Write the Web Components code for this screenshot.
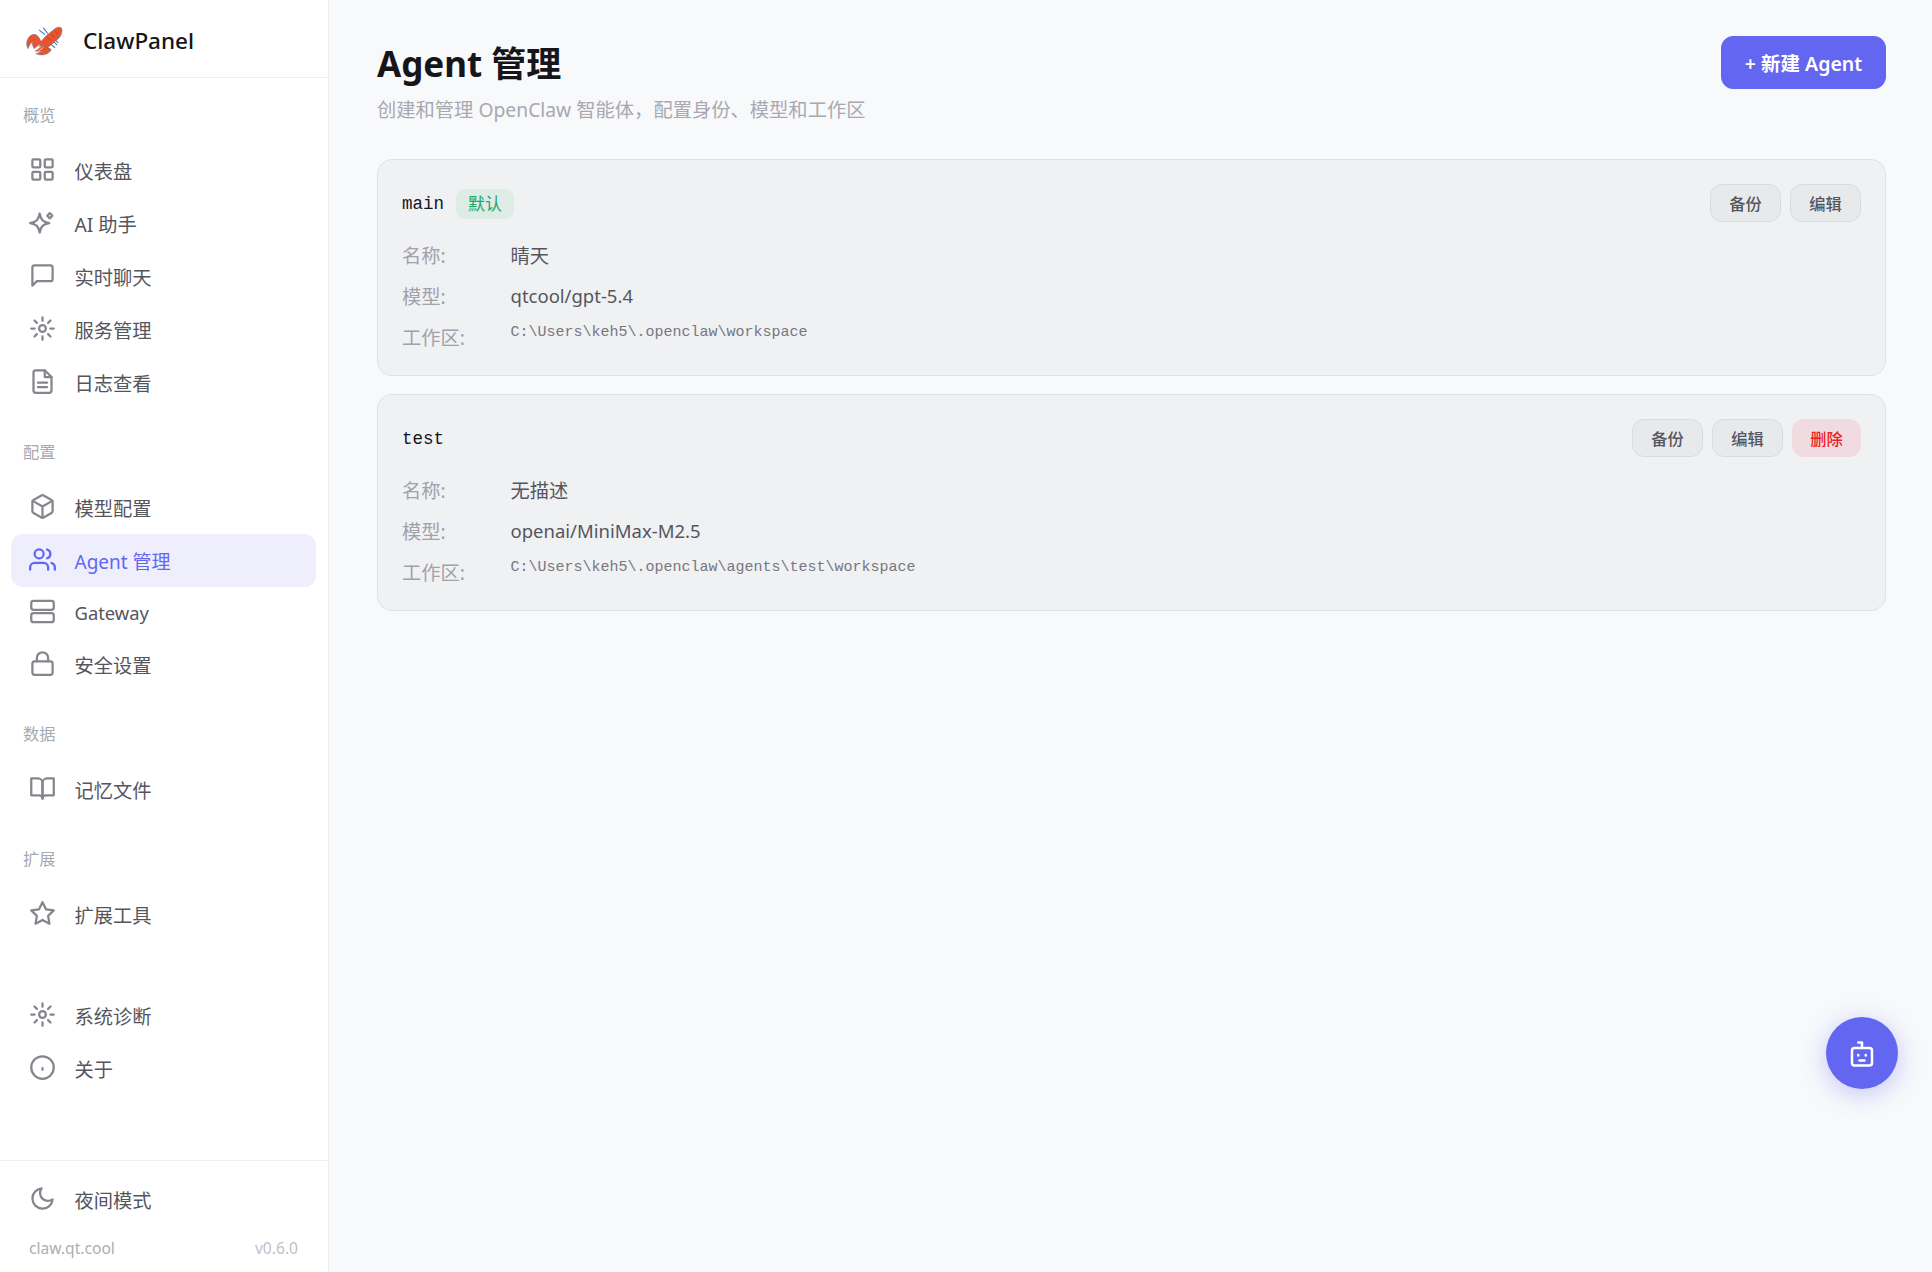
<!DOCTYPE html>
<html lang="zh-CN">
<head>
<meta charset="utf-8">
<title>ClawPanel</title>
<style>
	html, body { margin: 0; height: 100%; }
	body {
		font-family: "Noto Sans", "Noto Sans CJK SC", sans-serif;
		color: #1a1a1f;
		background: #f8f9fb;
	}
</style>
</head>
<body>
<cp-app>
	<cp-sidebar slot="side">
		<cp-nav-section label="概览">
			<cp-nav-item icon="grid">仪表盘</cp-nav-item>
			<cp-nav-item icon="sparkle">AI 助手</cp-nav-item>
			<cp-nav-item icon="chat">实时聊天</cp-nav-item>
			<cp-nav-item icon="sun">服务管理</cp-nav-item>
			<cp-nav-item icon="file">日志查看</cp-nav-item>
		</cp-nav-section>
		<cp-nav-section label="配置">
			<cp-nav-item icon="box">模型配置</cp-nav-item>
			<cp-nav-item icon="users" active style="--item-font: 19px">Agent 管理</cp-nav-item>
			<cp-nav-item icon="server" style="--item-h: 51px; --item-font: 18.400px">Gateway</cp-nav-item>
			<cp-nav-item icon="lock">安全设置</cp-nav-item>
		</cp-nav-section>
		<cp-nav-section label="数据">
			<cp-nav-item icon="book">记忆文件</cp-nav-item>
		</cp-nav-section>
		<cp-nav-section label="扩展">
			<cp-nav-item icon="star">扩展工具</cp-nav-item>
		</cp-nav-section>
		<cp-nav-section>
			<cp-nav-item icon="sun">系统诊断</cp-nav-item>
			<cp-nav-item icon="info">关于</cp-nav-item>
		</cp-nav-section>
		<cp-nav-item slot="theme" icon="moon">夜间模式</cp-nav-item>
	</cp-sidebar>
	<cp-page-header title="Agent 管理" subtitle="创建和管理 OpenClaw 智能体，配置身份、模型和工作区">
		<cp-button variant="primary">+ 新建 Agent</cp-button>
	</cp-page-header>
	<agent-card agent-id="main" name="晴天" model="qtcool/gpt-5.4" workspace="C:\Users\keh5\.openclaw\workspace" is-default>
		<cp-button>备份</cp-button>
		<cp-button>编辑</cp-button>
	</agent-card>
	<agent-card agent-id="test" name="无描述" model="openai/MiniMax-M2.5" workspace="C:\Users\keh5\.openclaw\agents\test\workspace">
		<cp-button>备份</cp-button>
		<cp-button>编辑</cp-button>
		<cp-button variant="danger">删除</cp-button>
	</agent-card>
	<cp-fab slot="overlay"></cp-fab>
</cp-app>

<script>
const ICONS = {
	grid: '<rect x="3" y="3" width="7" height="7" rx="1"/><rect x="14" y="3" width="7" height="7" rx="1"/><rect x="3" y="14" width="7" height="7" rx="1"/><rect x="14" y="14" width="7" height="7" rx="1"/>',
	sparkle: '<path d="M9.500 4c1 5.600 2.900 7.500 8.500 8.500-5.600 1-7.500 2.900-8.500 8.500-1-5.600-2.900-7.500-8.500-8.500 5.600-1 7.500-2.900 8.500-8.500z"/><path d="M18.500 3.700l2.300 2.300-2.300 2.300-2.300-2.300z"/>',
	chat: '<path d="M21 15a2 2 0 0 1-2 2H7l-4 4V5a2 2 0 0 1 2-2h14a2 2 0 0 1 2 2z"/>',
	sun: '<circle cx="12" cy="12" r="3"/><path d="M12 2v3M12 19v3M4.900 4.900l2.100 2.100M17 17l2.100 2.100M2 12h3M19 12h3M4.900 19.100L7 17M17 7l2.100-2.100"/>',
	file: '<path d="M14 2H6a2 2 0 0 0-2 2v16a2 2 0 0 0 2 2h12a2 2 0 0 0 2-2V8z"/><path d="M14 2v6h6M16 13H8M16 17H8"/>',
	box: '<path d="M21 16V8a2 2 0 0 0-1-1.730l-7-4a2 2 0 0 0-2 0l-7 4A2 2 0 0 0 3 8v8a2 2 0 0 0 1 1.730l7 4a2 2 0 0 0 2 0l7-4A2 2 0 0 0 21 16z"/><path d="M3.300 7L12 12l8.700-5M12 22V12"/>',
	users: '<path d="M17 21v-2a4 4 0 0 0-4-4H5a4 4 0 0 0-4 4v2"/><circle cx="9" cy="7" r="4"/><path d="M23 21v-2a4 4 0 0 0-3-3.870M16 3.130a4 4 0 0 1 0 7.750"/>',
	server: '<rect x="2" y="2.500" width="20" height="8" rx="2"/><rect x="2" y="13.500" width="20" height="8" rx="2"/>',
	lock: '<rect x="3" y="10" width="18" height="12" rx="2"/><path d="M7 10V7a5 5 0 0 1 10 0v3"/>',
	book: '<path d="M2 3h6a4 4 0 0 1 4 4v14a3 3 0 0 0-3-3H2z"/><path d="M22 3h-6a4 4 0 0 0-4 4v14a3 3 0 0 1 3-3h7z"/>',
	star: '<path d="M12 2l3.090 6.260L22 9.270l-5 4.870 1.180 6.880L12 17.770l-6.180 3.250L7 14.140 2 9.270l6.910-1.010z"/>',
	info: '<circle cx="12" cy="12" r="10"/><path d="M12 12.500v1.500"/>',
	moon: '<path d="M21 12.790A9 9 0 1 1 11.210 3 7 7 0 0 0 21 12.790z"/>',
};

class CpIcon extends HTMLElement {
	connectedCallback() {
		const size = this.getAttribute( 'size' ) || 27;
		this.attachShadow( { mode: 'open' } );
		this.shadowRoot.innerHTML = `
			<style>
			:host { display: block; flex: none; width: ${ size }px; height: ${ size }px; margin-top: -2px; }
			svg { display: block; width: 100%; height: 100%; fill: none; stroke: currentColor; stroke-width: 2; stroke-linecap: round; stroke-linejoin: round; }
			</style>
			<svg viewBox="0 0 24 24">${ ICONS[ this.getAttribute( 'name' ) ] }</svg>
		`;
	}
}

class CpApp extends HTMLElement {
	connectedCallback() {
		this.attachShadow( { mode: 'open' } );
		this.shadowRoot.innerHTML = `
			<style>
			:host { display: flex; height: 100vh; position: relative; overflow: hidden; }
			main { flex: 1; min-width: 0; padding: 36px 46px 0 48px; display: flex; flex-direction: column; gap: 18px; }
			</style>
			<slot name="side"></slot>
			<main><slot></slot></main>
			<slot name="overlay"></slot>
		`;
	}
}

class CpSidebar extends HTMLElement {
	connectedCallback() {
		this.attachShadow( { mode: 'open' } );
		this.shadowRoot.innerHTML = `
			<style>
			:host { display: flex; flex-direction: column; flex: none; width: 328px; background: #fff; border-right: 1px solid #ececef; }
			header { height: 77px; border-bottom: 1px solid #f0f0f2; display: flex; align-items: center; padding-left: 26px; gap: 20px; box-sizing: content-box; }
			header svg { width: 37px; height: 31px; flex: none; margin-top: 6px; }
			.brand { font-size: 22.500px; font-weight: 500; color: #15151a; margin-top: 4px; }
			nav { flex: 1; padding: 0 12px 0 11px; display: flex; flex-direction: column; }
			footer { border-top: 1px solid #f0f0f2; padding: 12px 12px 0 11px; height: 112px; box-sizing: border-box; }
			.meta { display: flex; justify-content: space-between; padding: 11px 18px 0 18px; font-size: 15.600px; color: #c0c0c8; }
			.meta span:first-child { color: #adadb5; }
			</style>
			<header>
				<svg viewBox="0 0 36 30" aria-hidden="true">
					<g fill="none" stroke="#3f74bd" stroke-width="1" stroke-linecap="round">
						<path d="M18 8L13 4M21 7l-4-5M24 13l6 5M26 11l5 5M21 15l7 6M17 18l7 5"/>
					</g>
					<path d="M13 20C14 12 23 7 28 2.500c2.500-2 6.500-2 7 .5C35.500 7 33.500 11 30 13.500c-4 3-8 7-12 10z" fill="#e8542b" stroke="#3f74bd" stroke-width=".4"/>
					<path d="M15 16C12 8 8 6.500 4 9.500.5 13-.5 18 2 22c1-3 2.500-5 4-6.500 0 3 1 5 2 6.500 2-2 5-3.500 7-6z" fill="#e8542b" stroke="#3f74bd" stroke-width=".4"/>
					<path d="M13 21c5-2.500 9 .5 11.500 2-2 4.500-9 6.500-15 4 3-1 5.500-2 6-3-2 1-5 1-7 0 2-1 4-1.500 4.500-3z" fill="#e8542b" stroke="#3f74bd" stroke-width=".4"/>
					<path d="M21 11l3 3M24.500 8l3 3M28 5l3 3" stroke="#b93d1c" stroke-width=".9"/>
					<path d="M15 19.500L7 25M17 20.500L9 27" stroke="#f6e2d4" stroke-width=".8"/>
				</svg>
				<span class="brand">ClawPanel</span>
			</header>
			<nav><slot></slot></nav>
			<footer>
				<slot name="theme"></slot>
				<div class="meta"><span>claw.qt.cool</span><span>v0.6.0</span></div>
			</footer>
		`;
	}
}

class CpNavSection extends HTMLElement {
	connectedCallback() {
		const label = this.getAttribute( 'label' );
		this.attachShadow( { mode: 'open' } );
		this.shadowRoot.innerHTML = `
			<style>
			:host { display: block; padding-top: 33px; }
			:host(:first-child) { padding-top: 27px; }
			:host(:not([label])) { padding-top: 48px; }
			.label { height: 20px; line-height: 20px; margin: 0 0 19px 12px; font-size: 16.250px; color: #a8a8b0; }
			</style>
			${ label ? `<div class="label">${ label }</div>` : '' }
			<slot></slot>
		`;
	}
}

class CpNavItem extends HTMLElement {
	connectedCallback() {
		this.attachShadow( { mode: 'open' } );
		this.shadowRoot.innerHTML = `
			<style>
			:host { display: flex; align-items: center; gap: 19px; height: var(--item-h, 53px); padding-left: 17.500px; border-radius: 12px; font-size: var(--item-font, 19.250px); color: #55555e; }
			:host([active]) { background: #eeeefd; color: #6366f1; }
			cp-icon { color: #85858d; }
			:host([active]) cp-icon { color: #6366f1; }
			</style>
			<cp-icon name="${ this.getAttribute( 'icon' ) }"></cp-icon>
			<span><slot></slot></span>
		`;
	}
}

class CpPageHeader extends HTMLElement {
	connectedCallback() {
		this.attachShadow( { mode: 'open' } );
		this.shadowRoot.innerHTML = `
			<style>
			:host { display: flex; justify-content: space-between; align-items: flex-start; margin-bottom: 17px; }
			h1 { margin: 4px 0 0; font-size: 35px; line-height: 48px; font-weight: 700; color: #15151a; }
			p { margin: 8px 0 0; font-size: 19.300px; line-height: 28px; color: #a8a8b0; }
			</style>
			<div>
				<h1>${ this.getAttribute( 'title' ) }</h1>
				<p>${ this.getAttribute( 'subtitle' ) }</p>
			</div>
			<slot></slot>
		`;
	}
}

class CpButton extends HTMLElement {
	connectedCallback() {
		this.attachShadow( { mode: 'open' } );
		this.shadowRoot.innerHTML = `
			<style>
			:host { display: inline-flex; align-items: center; justify-content: center; box-sizing: border-box; width: 71px; height: 38px; border: 1px solid #dadbde; border-radius: 12px; background: #e8e9eb; font-size: 16.250px; font-weight: 500; color: #55555e; }
			:host([variant="danger"]) { width: 69px; background: #f0dce0; border-color: transparent; color: #ee2222; }
			:host([variant="primary"]) { width: 165px; height: 53px; background: #6366f1; border-color: #6366f1; font-size: 19.500px; font-weight: 600; color: #fff; }
			</style>
			<slot></slot>
		`;
	}
}

class AgentCard extends HTMLElement {
	connectedCallback() {
		const get = ( name ) => this.getAttribute( name );
		this.attachShadow( { mode: 'open' } );
		this.shadowRoot.innerHTML = `
			<style>
			:host { display: block; box-sizing: border-box; height: 217px; padding: 24px 24px 0 24px; background: #f0f1f3; border: 1px solid #e0e1e4; border-radius: 15px; }
			.top { display: flex; align-items: center; height: 38px; gap: 12px; }
			.id { font-family: "Liberation Mono", monospace; font-size: 17.500px; color: #15151a; margin-top: 2px; }
			.badge { height: 30px; line-height: 30px; padding: 0 12px; border-radius: 9px; background: #deece6; font-size: 16.900px; color: #22a565; margin-top: 2px; }
			.actions { margin-left: auto; display: flex; gap: 9px; }
			.rows { margin-top: 12px; }
			.row { display: flex; height: 41px; align-items: center; font-size: 19.250px; color: #55555e; }
			.row span:first-child { width: 108.500px; flex: none; color: #a1a1a9; }
			.model { font-size: 18.500px; }
			.path { font-family: "Liberation Mono", monospace; font-size: 15px; color: #77777f; margin-top: -9px; }
			</style>
			<div class="top">
				<span class="id">${ get( 'agent-id' ) }</span>
				${ this.hasAttribute( 'is-default' ) ? '<span class="badge">默认</span>' : '' }
				<div class="actions"><slot></slot></div>
			</div>
			<div class="rows">
				<div class="row"><span>名称:</span><span>${ get( 'name' ) }</span></div>
				<div class="row"><span>模型:</span><span class="model">${ get( 'model' ) }</span></div>
				<div class="row"><span>工作区:</span><span class="path">${ get( 'workspace' ) }</span></div>
			</div>
		`;
	}
}

class CpFab extends HTMLElement {
	connectedCallback() {
		this.attachShadow( { mode: 'open' } );
		this.shadowRoot.innerHTML = `
			<style>
			:host { position: absolute; right: 34px; bottom: 183px; width: 72px; height: 72px; border-radius: 50%; background: #6366f1; box-shadow: 0 5px 24px rgba(99, 102, 241, .35); display: flex; align-items: center; justify-content: center; color: #fff; }
			svg { width: 30px; height: 30px; fill: none; stroke: currentColor; stroke-width: 2; stroke-linecap: round; stroke-linejoin: round; }
			</style>
			<svg viewBox="0 0 24 24">
				<rect x="4" y="8" width="16" height="14" rx="2"/>
				<path d="M12 8V3.500H9M9 13.500v.5M15 13.500v.5M10 18h4"/>
			</svg>
		`;
	}
}

customElements.define( 'cp-icon', CpIcon );
customElements.define( 'cp-app', CpApp );
customElements.define( 'cp-sidebar', CpSidebar );
customElements.define( 'cp-nav-section', CpNavSection );
customElements.define( 'cp-nav-item', CpNavItem );
customElements.define( 'cp-page-header', CpPageHeader );
customElements.define( 'cp-button', CpButton );
customElements.define( 'agent-card', AgentCard );
customElements.define( 'cp-fab', CpFab );
</script>
</body>
</html>
